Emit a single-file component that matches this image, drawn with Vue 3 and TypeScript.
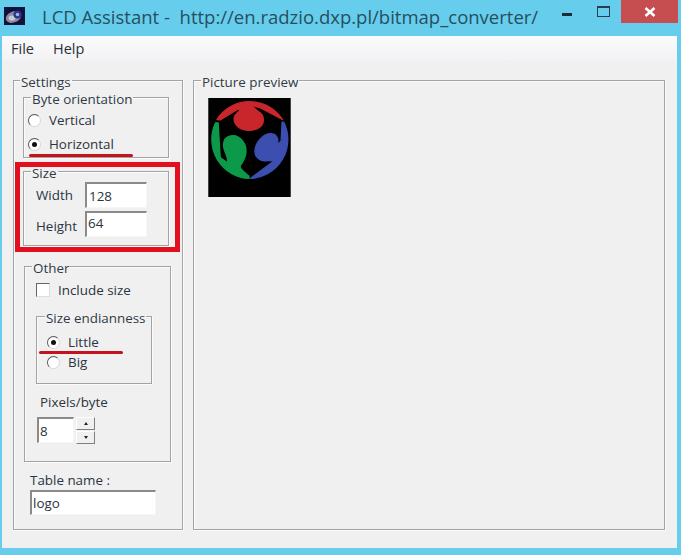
<script setup lang="ts">
const menus: string[] = ['File', 'Help']
</script>

<template>
  <div class="window">
    <header class="titlebar">
      <svg class="appicon" viewBox="0 0 21 18" width="21" height="18">
        <rect width="21" height="18" fill="#10123c" />
        <ellipse cx="9.5" cy="10" rx="8" ry="5.5" fill="#8b8d9c" transform="rotate(-22 9.5 10)" />
        <ellipse cx="8" cy="11" rx="3.4" ry="2.6" fill="#c9cbd2" />
        <circle cx="13.5" cy="7.5" r="4" fill="#2c3296" />
        <circle cx="13.5" cy="7.5" r="1.8" fill="#a9b0dc" />
      </svg>
      <span class="title">LCD Assistant -&nbsp; http://en.radzio.dxp.pl/bitmap_converter/</span>
      <div class="controls">
        <span class="min"></span>
        <span class="max"></span>
        <span class="close">
          <svg viewBox="0 0 12 10" width="12" height="10">
            <path d="M1.5 1 L10.5 9 M10.5 1 L1.5 9" stroke="#fff" stroke-width="2.6" />
          </svg>
        </span>
      </div>
    </header>

    <div class="client">
      <nav class="menubar">
        <span v-for="m in menus" :key="m">{{ m }}</span>
      </nav>
      <main class="body">
        <fieldset class="group settings">
          <legend>Settings</legend>

          <fieldset class="group byte">
            <legend>Byte orientation</legend>
            <label class="radio-row"><i class="radio"></i>Vertical</label>
            <label class="radio-row"><i class="radio on"></i>Horizontal</label>
            <span class="underline u-byte"></span>
          </fieldset>

          <div class="redbox">
            <fieldset class="group size">
              <legend>Size</legend>
              <div class="size-row"><span>Width</span><div class="input">128</div></div>
              <div class="size-row"><span>Height</span><div class="input">64</div></div>
            </fieldset>
          </div>

          <fieldset class="group other">
            <legend>Other</legend>
            <label class="check-row"><i class="check"></i>Include size</label>

            <fieldset class="group endian">
              <legend>Size endianness</legend>
              <label class="radio-row"><i class="radio on"></i>Little</label>
              <label class="radio-row"><i class="radio"></i>Big</label>
              <span class="underline u-endian"></span>
            </fieldset>

            <div class="pixels-label">Pixels/byte</div>
            <div class="spin">
              <div class="input spin-input">8</div>
              <div class="spin-btns">
                <button class="spin-btn"><i class="tri up"></i></button>
                <button class="spin-btn"><i class="tri down"></i></button>
              </div>
            </div>
          </fieldset>

          <div class="table-label">Table name :</div>
          <div class="input table-input">logo</div>
        </fieldset>

        <fieldset class="group preview">
          <legend>Picture preview</legend>
          <svg class="logo" viewBox="54 82 249 299" width="83" height="99">
            <rect x="54" y="82" width="249" height="299" fill="#000" />
            <path fill="#c9262c" stroke="#c9262c" stroke-width="4" stroke-linejoin="round" d="M80 147 A118 118 0 0 1 278 147 L212 112 L182 103 L207 124 C226 136 224 162 206 172 C185 184 150 182 137 161 C126 145 136 130 150 120 L146 114 L90 148 Z" />
            <path fill="#0c9a4a" stroke="#0c9a4a" stroke-width="4" stroke-linejoin="round" d="M76 157 A118 118 0 0 0 177 325 L177 318 C162 305 150 298 150 287 C168 262 176 236 158 212 C138 186 100 192 100 225 C100 245 116 258 112 278 L90 262 L85 180 L84 157 Z" />
            <path fill="#3c4fb0" stroke="#3c4fb0" stroke-width="4" stroke-linejoin="round" d="M282 155 A118 118 0 0 1 182 325 L192 317 L252 272 L235 270 C213 277 193 260 195 240 C198 213 222 188 245 190 C262 192 268 208 262 226 L274 212 L277 155 Z" />
          </svg>
        </fieldset>
      </main>
    </div>
  </div>
</template>

<style>
html, body { margin: 0; padding: 0; background: #66cdec; }
</style>

<style scoped>
.window {
  width: 681px;
  height: 555px;
  box-sizing: border-box;
  background: #66cdec;
  padding: 0 4px 7px 2px;
  display: flex;
  flex-direction: column;
  font-family: "Open Sans", "Noto Sans", sans-serif;
  color: #2b3440;
  overflow: hidden;
}
.titlebar {
  height: 36px;
  flex: none;
  display: flex;
  align-items: flex-start;
}
.appicon { margin: 7px 0 0 2px; }
.title {
  margin: 3px 0 0 17px;
  font-size: 18.5px;
  line-height: 28px;
  color: #274f60;
  white-space: nowrap;
}
.controls {
  margin-left: auto;
  display: flex;
  align-items: flex-start;
}
.min {
  width: 10px;
  height: 3px;
  background: #1d2c3c;
  margin: 13px 25px 0 0;
}
.max {
  width: 11px;
  height: 8px;
  border: 1px solid #2a3d50;
  border-top-width: 2px;
  margin: 6px 11px 0 0;
}
.close {
  width: 57px;
  height: 23px;
  background: #c64d50;
  display: flex;
  align-items: center;
  justify-content: center;
  margin-right: -1px;
}
.client {
  flex: 1;
  display: flex;
  flex-direction: column;
  background: #f0f0f0;
  min-height: 0;
}
.menubar {
  height: 24px;
  flex: none;
  display: flex;
  gap: 19px;
  padding-left: 9px;
  align-items: center;
  font-size: 14.5px;
  background: linear-gradient(#fafafb, #f3f3f5);
  color: #2a3038;
}
.body {
  flex: 1;
  display: flex;
  gap: 10px;
  padding: 11px 12px 18px 11px;
  font-size: 13.4px;
  min-height: 0;
}
.group {
  margin: 0;
  min-width: 0;
  box-sizing: border-box;
  border: 1px solid #a3a3a3;
  box-shadow: 1px 1px 0 #fbfbfb, inset 1px 1px 0 #fbfbfb;
  border-radius: 0;
  padding: 0;
  position: relative;
}
legend {
  padding: 3px 1px 0;
  margin-left: 7px;
  line-height: 16px;
  color: #2f3a46;
  white-space: nowrap;
}
.settings {
  width: 170px;
  padding: 0 9px;
}
.settings > legend { margin-left: -3px; }
.preview {
  flex: 1;
}
.logo {
  display: block;
  margin: 8px 0 0 14px;
}
.byte {
  width: 146px;
  height: 70px;
  margin-top: -2px;
  padding: 1px 0 0 4px;
}
.byte > legend { margin-left: 3px; }
.radio-row {
  display: flex;
  align-items: center;
  gap: 8px;
  height: 24px;
}
.radio {
  width: 13px;
  height: 13px;
  box-sizing: border-box;
  border-radius: 50%;
  border: 1px solid;
  border-color: #555 #d8d8d8 #d8d8d8 #555;
  background: #fff;
  position: relative;
  flex: none;
}
.radio.on::after {
  content: "";
  position: absolute;
  left: 3px;
  top: 3px;
  width: 5px;
  height: 5px;
  border-radius: 50%;
  background: #111;
}
.underline {
  position: absolute;
  height: 3px;
  background: #c4121f;
  border-radius: 2px;
}
.u-byte { left: 5px; top: 47px; width: 104px; }
.u-endian { left: 2px; top: 25px; width: 84px; }
.redbox {
  margin: 4px -7px 0 -8px;
  border: 5px solid #e2101f;
  height: 90px;
  box-sizing: border-box;
  padding-left: 3px;
}
.size {
  width: 146px;
  height: 84px;
  margin-top: -5px;
}
.size-row {
  display: flex;
  align-items: center;
  height: 26px;
  margin: 1px 0 3px 12px;
}
.size-row span { width: 49px; }
.size-row + .size-row span { padding-top: 3px; }
.input {
  box-sizing: border-box;
  background: #fff;
  border: 2px solid #8a8a8a;
  border-right: 1px solid #f6f6f6;
  border-bottom: 1px solid #f6f6f6;
  padding-left: 2px;
  display: flex;
  align-items: center;
}
.size-row .input { width: 62px; height: 26px; }
.size-row + .size-row .input { padding: 0 0 3px 1px; }
.other {
  width: 147px;
  height: 205px;
  margin: 5px 0 0 1px;
}
.check-row {
  display: flex;
  align-items: center;
  gap: 8px;
  height: 24px;
  margin: 2px 0 0 11px;
}
.check {
  width: 14px;
  height: 14px;
  background: #fff;
  border: 1px solid;
  border-color: #666 #ddd #ddd #666;
  box-sizing: border-box;
  flex: none;
}
.endian {
  width: 116px;
  height: 77px;
  margin: 5px 0 0 11px;
  padding: 6px 0 0 10px;
}
.endian > legend { margin-left: -2px; }
.endian .radio-row { height: 20px; }
.pixels-label { margin: 9px 0 0 15px; line-height: 18px; }
.spin { display: flex; margin: 6px 0 0 12px; gap: 2px; }
.spin-input { width: 37px; height: 26px; padding-left: 1px; }
.spin-btns { display: flex; flex-direction: column; gap: 1px; }
.spin-btn {
  width: 19px;
  height: 13px;
  padding: 0;
  box-sizing: border-box;
  background: #f0f0f0;
  border: 1px solid #fff;
  border-right-color: #7f7f7f;
  border-bottom-color: #7f7f7f;
  display: flex;
  align-items: center;
  justify-content: center;
}
.tri {
  width: 0;
  height: 0;
  border-left: 2px solid transparent;
  border-right: 2px solid transparent;
}
.tri.up { border-bottom: 3px solid #222; }
.tri.down { border-top: 3px solid #222; }
.table-label { margin: 9px 0 0 7px; line-height: 18px; }
.table-input { width: 126px; height: 25px; margin: 1px 0 0 7px; padding-left: 1px; }
</style>
